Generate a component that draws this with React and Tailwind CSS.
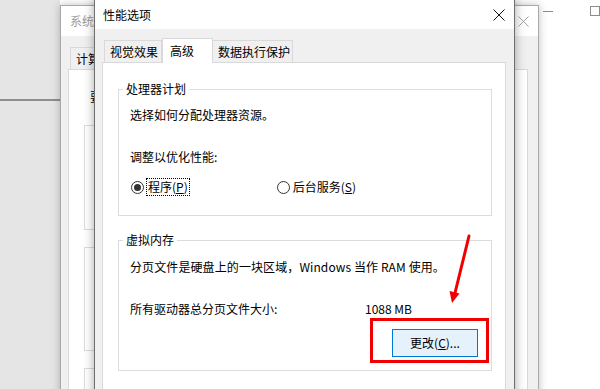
import React from 'react'

const Radio = ({ checked }) => (
    <span className="w-[13px] h-[13px] rounded-full border border-[#333] bg-white flex items-center justify-center shrink-0">
        {checked && <span className="w-[7px] h-[7px] rounded-full bg-[#333]" />}
    </span>
);

const CloseIcon = ({ color, size }) => (
    <svg width={size} height={size} viewBox="0 0 12 12">
        <path d="M0.5 0.5 L11.5 11.5 M11.5 0.5 L0.5 11.5" stroke={color} strokeWidth="1" fill="none" />
    </svg>
);

const App = () => {
    return (
        <div className="relative w-[600px] h-[389px] overflow-hidden bg-white font-['Noto_Sans_CJK_SC',sans-serif] text-[12px] leading-[16px] text-black">
            {/* left desktop strip */}
            <div className="absolute left-0 top-0 w-[60px] h-full bg-[#e5e5e5]">
                <div className="mt-[99px] h-[2px] bg-[#8e8e8e]" />
            </div>

            {/* window far behind: min / max buttons */}
            <div className="absolute left-[543px] top-[11px] w-[10px] h-px bg-[#8c8c8c]" />
            <div className="absolute left-[590px] top-[6px] w-[10px] h-[10px] border border-[#8c8c8c]" />

            {/* 系统属性 window behind, only its edges show */}
            <div className="absolute left-[60px] top-[5px] w-[479px] h-[400px] border border-[#a8a8a8] bg-[#f0f0f0] shadow-[0_0_8px_rgba(0,0,0,0.25)]">
                <div className="h-[30px] bg-white flex items-center justify-between pl-[9px] pr-[9px]">
                    <span className="w-[24px] overflow-hidden whitespace-nowrap text-[#9a9a9a]">系统属性</span>
                    <CloseIcon color="#9a9a9a" size={11} />
                </div>
                <div className="pl-[7px] pt-[11px]">
                    <div className="flex pl-[2px]">
                        <div className="h-[22px] w-[70px] border border-b-0 border-[#d9d9d9] pl-[5px] flex items-center">
                            <span className="w-[18px] overflow-hidden whitespace-nowrap">计算机名</span>
                        </div>
                    </div>
                    <div className="w-[460px] h-[330px] bg-white border border-[#d9d9d9] pt-[19px] pl-[21px]">
                        <p className="w-[4px] overflow-hidden whitespace-nowrap">要进行大多数更改，你必须作为管理员登录。</p>
                        <div className="ml-[-6px] mt-[20px] w-[420px] h-[105px] border border-[#dcdcdc]" />
                        <div className="ml-[-6px] mt-[17px] w-[420px] h-[104px] border border-[#dcdcdc]" />
                        <div className="ml-[-6px] mt-[17px] w-[420px] h-[60px] border border-[#dcdcdc]" />
                    </div>
                </div>
            </div>

            {/* 性能选项 dialog */}
            <div className="absolute left-[94px] top-[-1px] w-[421px] h-[400px] border border-[#6f6f6f] bg-[#f0f0f0] shadow-[0_0_10px_rgba(0,0,0,0.35)]">
                <div className="h-[29px] bg-white flex items-center justify-between pl-[8px] pr-[9px]">
                    <span>性能选项</span>
                    <CloseIcon color="#111" size={12} />
                </div>
                <div className="px-[7px] pt-[9px]">
                    <div className="flex items-end h-[24px] pl-[2px]">
                        <div className="h-[22px] w-[58px] border border-b-0 border-[#d9d9d9] pl-[5px] flex items-center">视觉效果</div>
                        <div className="relative z-10 h-[25px] w-[51px] -mb-px border border-b-0 border-[#d9d9d9] bg-white pl-[7px] flex items-center">高级</div>
                        <div className="h-[22px] w-[80px] border border-b-0 border-l-0 border-[#d9d9d9] pl-[5px] flex items-center">数据执行保护</div>
                    </div>
                    <div className="w-[404px] h-[340px] bg-white border border-[#d9d9d9] pt-[26px] pl-[15px]">
                        {/* 处理器计划 */}
                        <div className="relative w-[374px] h-[127px] border border-[#dcdcdc] pt-[17px] pl-[11px]">
                            <span className="absolute -top-[9px] left-[4px] bg-white px-[3px]">处理器计划</span>
                            <p>选择如何分配处理器资源。</p>
                            <p className="mt-[26px]">调整以优化性能:</p>
                            <div className="mt-[13px] flex items-center h-[18px]">
                                <span className="ml-[1px]"><Radio checked /></span>
                                <span className="ml-[2px] border border-dotted border-black px-[1px] leading-[16px]">程序(<u>P</u>)</span>
                                <span className="ml-[87px]"><Radio /></span>
                                <span className="ml-[3px]">后台服务(<u>S</u>)</span>
                            </div>
                        </div>

                        {/* 虚拟内存 */}
                        <div className="relative mt-[24px] w-[374px] h-[131px] border border-[#dcdcdc] pt-[18px] pl-[11px] pr-[13px]">
                            <span className="absolute -top-[9px] left-[4px] bg-white px-[3px]">虚拟内存</span>
                            <p className="tracking-[0.1px]">分页文件是硬盘上的一块区域，Windows 当作 RAM 使用。</p>
                            <div className="mt-[26px] flex">
                                <span className="w-[235px]">所有驱动器总分页文件大小:</span>
                                <span>1088 MB</span>
                            </div>
                            <div className="mt-[12px] flex justify-end">
                                <button className="w-[86px] h-[28px] border border-[#0078d7] bg-[#e5f1fb] flex items-center justify-center">
                                    更改(<u>C</u>)...
                                </button>
                            </div>
                        </div>
                    </div>
                </div>
            </div>

            {/* annotation: red box and arrow */}
            <div className="absolute left-[370px] top-[318px] w-[119px] h-[45px] border-[3px] border-[#f20000]" />
            <svg className="absolute left-0 top-0 pointer-events-none" width="600" height="389">
                <line x1="469" y1="236" x2="455" y2="293" stroke="#f20000" strokeWidth="3" strokeLinecap="round" />
                <polygon points="452,303 449.5,291 459.5,293.5" fill="#f20000" />
            </svg>
        </div>
    );
}

export default App
